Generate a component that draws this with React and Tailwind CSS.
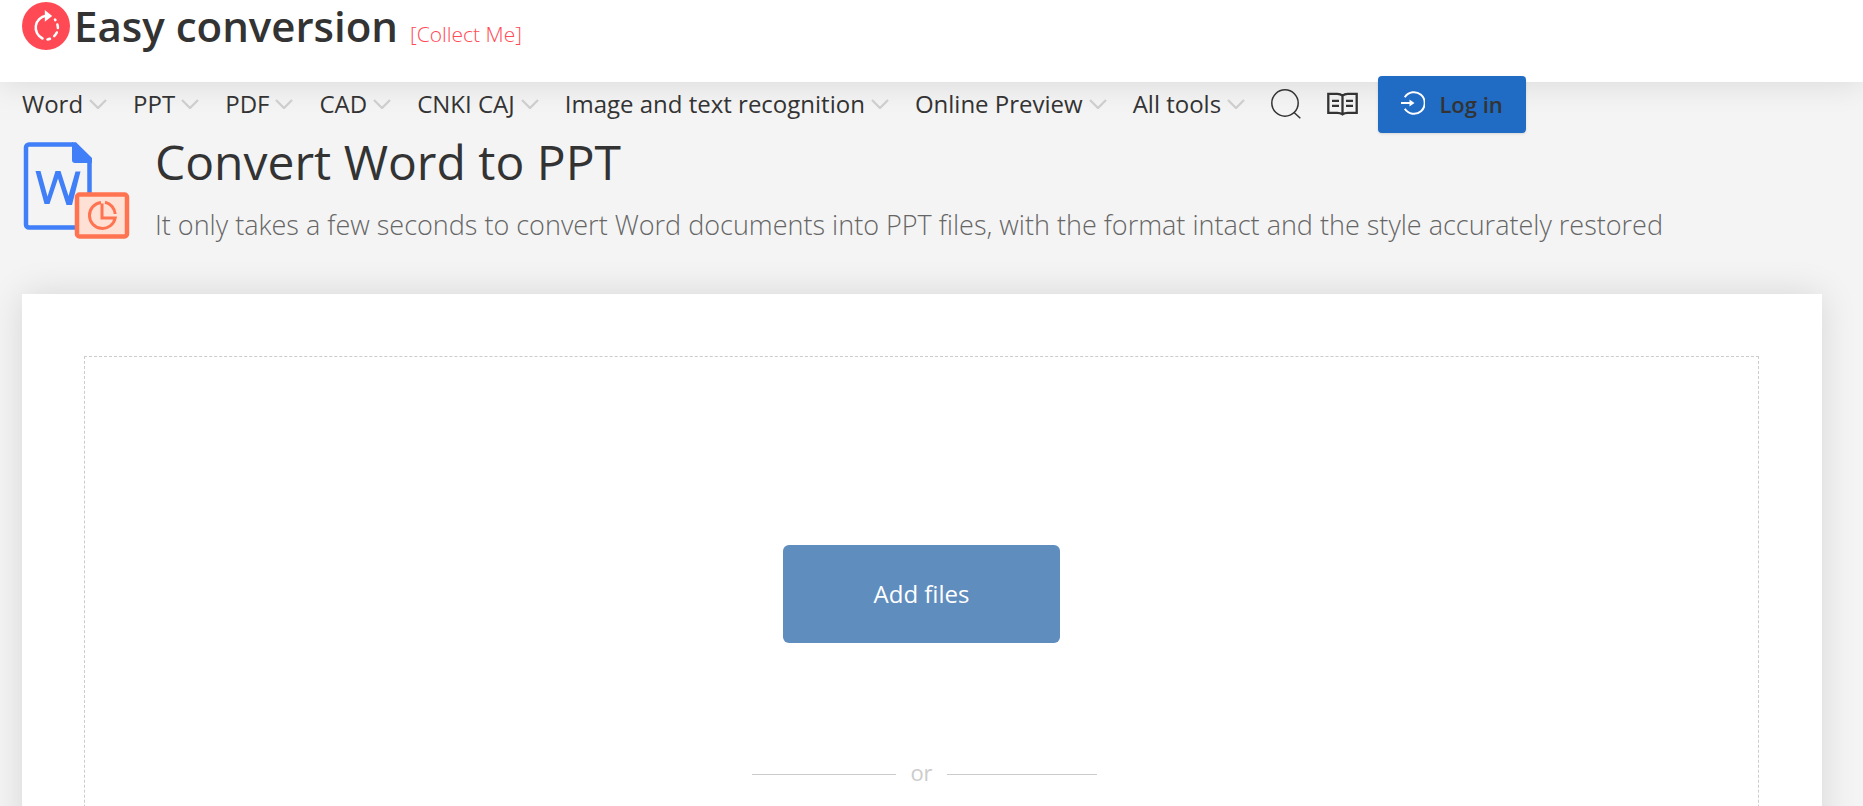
const menu = ["Word", "PPT", "PDF", "CAD", "CNKI CAJ", "Image and text recognition", "Online Preview", "All tools"];

function LogoMark() {
  return (
    <svg viewBox="0 0 48 48" className="size-12 shrink-0" aria-hidden="true">
      <circle cx="24" cy="24" r="24" fill="#ff4a55" />
      <g fill="none" stroke="#fff" strokeWidth="2.500" strokeLinecap="round">
        <path d="M20.500 36.500A12 12 0 0 1 24 13.800" />
        <path d="M35.400 22.500a12 12 0 0 1 .5 3.500M34.800 30.500a12 12 0 0 1-2.600 3.600M28 36.800a12 12 0 0 1-2.500 .6M33 17.600l.4.5" />
      </g>
      <path d="M22.800 8l7.400 6-7.400 5.800z" fill="#fff" />
    </svg>
  );
}

function Chevron() {
  return (
    <svg viewBox="0 0 18 10" className="h-[10px] w-[18px] shrink-0" fill="none" stroke="#cdcdcd" strokeWidth="2.200" aria-hidden="true">
      <path d="M1 1l8 8 8-8" />
    </svg>
  );
}

function SearchIcon() {
  return (
    <svg viewBox="0 0 30 30" className="size-[30px]" fill="none" stroke="#333" strokeWidth="1.500" aria-hidden="true">
      <circle cx="14" cy="14" r="13.200" />
      <path d="M22.800 23.300l6.500 6" />
    </svg>
  );
}

function BookIcon() {
  return (
    <svg viewBox="0 0 31 24" className="h-6 w-[31px]" fill="none" stroke="#333" strokeWidth="2.300" aria-hidden="true">
      <path d="M1.300 1.800h9q3.200 0 5.200 2 2-2 5.200-2h9v19h-9q-3.200 0-5.200 1.600-2-1.600-5.200-1.600h-9zM15.500 3.500v19" />
      <path d="M5 8.800h7M5 13.800h7M19 8.800h7M19 13.800h7" />
    </svg>
  );
}

function LoginIcon() {
  return (
    <svg viewBox="0 0 24 24" className="mb-1 size-6" fill="none" stroke="#fff" strokeWidth="2" aria-hidden="true">
      <path d="M3.800 6.200a10.800 10.800 0 1 1 0 11.600" />
      <path d="M0 12h11" />
      <path d="M8.500 8.500l5 3.500-5 3.500z" fill="#fff" stroke="none" />
    </svg>
  );
}

function ConvertIcon() {
  return (
    <svg viewBox="0 0 108 98" className="h-[98px] w-[108px] shrink-0" fill="none" aria-hidden="true">
      <path d="M51 3.500H7a3 3 0 0 0-3 3v77a3 3 0 0 0 3 3h50M67.500 19v38" stroke="#407ff8" strokeWidth="4.500" />
      <path d="M50 1.200h4L70 17v5H53a3 3 0 0 1-3-3z" fill="#407ff8" />
      <path d="M13.500 30h5l7 25.500L33.500 30h5L46.500 55 53.500 30.500h5L50 64h-5.500L36 37.500 27.500 63H22.500z" fill="#407ff8" />
      <rect x="55" y="53.500" width="50" height="42" rx="2.500" fill="#ffe0d5" stroke="#ff7350" strokeWidth="4.500" />
      <path d="M79 61.500A13 13 0 1 0 93.200 77H80V62.500" stroke="#ff7350" strokeWidth="3" />
      <path d="M83 61.200A13 13 0 0 1 93.200 73" stroke="#ff7350" strokeWidth="3" />
    </svg>
  );
}

export default function App() {
  return (
    <div className="flex h-screen flex-col overflow-hidden bg-[#f4f4f4] font-['Open_Sans','Noto_Sans',sans-serif] text-[#333]">
      <header className="flex h-[82px] shrink-0 items-start gap-1 bg-white pl-[22px] shadow-[0_0_34px_rgba(0,0,0,0.12)]">
        <div className="flex h-[51px] items-center gap-1">
          <LogoMark />
          <div className="flex items-baseline gap-3">
            <span className="text-[42px] font-semibold leading-[51px]">Easy conversion</span>
            <a href="#collect" className="text-[21px] font-light text-[#ff4a55]">[Collect Me]</a>
          </div>
        </div>
      </header>

      <nav className="relative -mt-1.5 flex h-[57px] shrink-0 items-center pl-[22px]">
        <div className="flex items-center gap-[26px] pb-0.5 text-2xl">
          {menu.map((label) => (
            <a key={label} href="#menu" className="flex items-center gap-1.5 whitespace-nowrap">
              {label}
              <Chevron />
            </a>
          ))}
          <button type="button" aria-label="Search"><SearchIcon /></button>
          <button type="button" aria-label="Guide"><BookIcon /></button>
        </div>
        <button type="button" className="ml-5 flex h-[57px] w-[148px] items-center justify-center gap-3.5 rounded bg-[#206bc4] text-[22px] font-semibold shadow-sm">
          <LoginIcon />
          Log in
        </button>
      </nav>

      <section className="flex h-[161px] shrink-0 gap-[25px] pl-[22px] pt-2">
        <ConvertIcon />
        <div className="flex flex-col">
          <h1 className="-mt-2 text-5xl leading-[58px]">Convert Word to PPT</h1>
          <p className="mt-4 whitespace-nowrap text-[27px] font-light leading-9 text-[#666]">
            It only takes a few seconds to convert Word documents into PPT files, with the format intact and the style accurately restored
          </p>
        </div>
      </section>

      <main className="ml-[22px] mr-[41px] h-[800px] shrink-0 bg-white p-[62px] pr-[63px] shadow-[0_0_34px_rgba(0,0,0,0.12)]">
        <div className="flex h-full flex-col items-center border border-dashed border-[#ccc] pt-[188px]">
          <button type="button" className="h-[98px] w-[277px] rounded-md bg-[#5f8dbe] text-2xl text-white">Add files</button>
          <div className="ml-[6px] mt-28 flex w-[345px] items-center justify-between text-[22px] leading-[34px] text-[#ccc]">
            <span className="h-px w-36 bg-[#ccc]" />
            <span className="pb-1">or</span>
            <span className="h-px w-[150px] bg-[#ccc]" />
          </div>
        </div>
      </main>
    </div>
  );
}
